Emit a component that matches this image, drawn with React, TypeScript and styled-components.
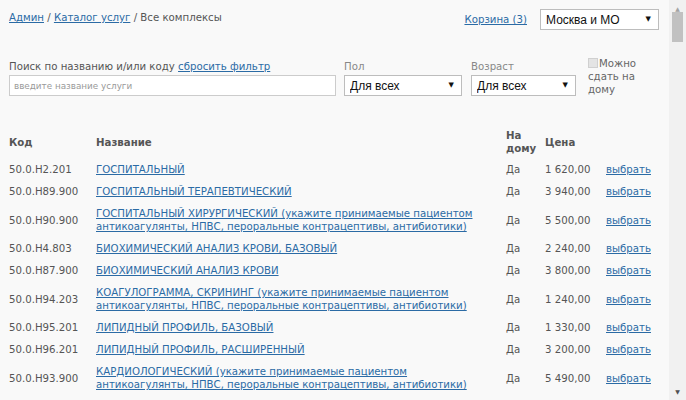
import React from 'react';
import styled, { createGlobalStyle } from 'styled-components';

interface Service {
  code: string;
  name: string;
  home: string;
  price: string;
}

const services: Service[] = [
  { code: '50.0.H2.201', name: 'ГОСПИТАЛЬНЫЙ', home: 'Да', price: '1 620,00' },
  { code: '50.0.H89.900', name: 'ГОСПИТАЛЬНЫЙ ТЕРАПЕВТИЧЕСКИЙ', home: 'Да', price: '3 940,00' },
  {
    code: '50.0.H90.900',
    name: 'ГОСПИТАЛЬНЫЙ ХИРУРГИЧЕСКИЙ (укажите принимаемые пациентом антикоагулянты, НПВС, пероральные контрацептивы, антибиотики)',
    home: 'Да',
    price: '5 500,00',
  },
  { code: '50.0.H4.803', name: 'БИОХИМИЧЕСКИЙ АНАЛИЗ КРОВИ, БАЗОВЫЙ', home: 'Да', price: '2 240,00' },
  { code: '50.0.H87.900', name: 'БИОХИМИЧЕСКИЙ АНАЛИЗ КРОВИ', home: 'Да', price: '3 800,00' },
  {
    code: '50.0.H94.203',
    name: 'КОАГУЛОГРАММА, СКРИНИНГ (укажите принимаемые пациентом антикоагулянты, НПВС, пероральные контрацептивы, антибиотики)',
    home: 'Да',
    price: '1 240,00',
  },
  { code: '50.0.H95.201', name: 'ЛИПИДНЫЙ ПРОФИЛЬ, БАЗОВЫЙ', home: 'Да', price: '1 330,00' },
  { code: '50.0.H96.201', name: 'ЛИПИДНЫЙ ПРОФИЛЬ, РАСШИРЕННЫЙ', home: 'Да', price: '3 200,00' },
  {
    code: '50.0.H93.900',
    name: 'КАРДИОЛОГИЧЕСКИЙ (укажите принимаемые пациентом антикоагулянты, НПВС, пероральные контрацептивы, антибиотики)',
    home: 'Да',
    price: '5 490,00',
  },
];

const GlobalStyle = createGlobalStyle`
  html, body {
    margin: 0;
    padding: 0;
    overflow: hidden;
    background: #f9f9f9;
  }
`;

const App: React.FC = () => {
  return (
    <>
      <GlobalStyle />
      <Frame>
        <Page>
          <TopBar>
            <Crumbs>
              <Link href="#">Админ</Link> / <Link href="#">Каталог услуг</Link> / Все комплексы
            </Crumbs>
            <Cart>
              <Link href="#">Корзина (3)</Link>
              <SelectBox width={119}>
                <Select defaultValue="msk">
                  <option value="msk">Москва и МО</option>
                </Select>
                <Caret>▼</Caret>
              </SelectBox>
            </Cart>
          </TopBar>

          <Filters>
            <Field gap={8}>
              <FieldLabel>
                Поиск по названию и/или коду <Link href="#">сбросить фильтр</Link>
              </FieldLabel>
              <SearchInput placeholder="введите название услуги" />
            </Field>
            <Field gap={9}>
              <FieldLabel light>Пол</FieldLabel>
              <SelectBox width={118}>
                <Select defaultValue="all">
                  <option value="all">Для всех</option>
                </Select>
                <Caret>▼</Caret>
              </SelectBox>
            </Field>
            <Field gap={12}>
              <FieldLabel light>Возраст</FieldLabel>
              <SelectBox width={105}>
                <Select defaultValue="all">
                  <option value="all">Для всех</option>
                </Select>
                <Caret>▼</Caret>
              </SelectBox>
            </Field>
            <HomeCheck>
              <Box />
              Можно сдать на дому
            </HomeCheck>
          </Filters>

          <Table>
            <colgroup>
              <col style={{ width: 87 }} />
              <col style={{ width: 410 }} />
              <col style={{ width: 39 }} />
              <col style={{ width: 61 }} />
              <col />
            </colgroup>
            <thead>
              <tr>
                <Th>Код</Th>
                <Th>Название</Th>
                <Th>На дому</Th>
                <Th>Цена</Th>
                <Th />
              </tr>
            </thead>
            <tbody>
              {services.map((s) => (
                <tr key={s.code}>
                  <Td>{s.code}</Td>
                  <Td>
                    <Link href="#">{s.name}</Link>
                  </Td>
                  <Td>{s.home}</Td>
                  <Td>{s.price}</Td>
                  <Td>
                    <Link href="#">выбрать</Link>
                  </Td>
                </tr>
              ))}
            </tbody>
          </Table>
        </Page>

        <ScrollBar>
          <ScrollArrow>▲</ScrollArrow>
          <Track>
            <Thumb />
          </Track>
          <ScrollArrow dark>▼</ScrollArrow>
        </ScrollBar>
      </Frame>
    </>
  );
};

export default App;

const Frame = styled.div`
  display: flex;
  height: 400px;
  overflow: hidden;
  font-family: 'DejaVu Sans', Verdana, sans-serif;
  font-size: 10.2px;
  line-height: 13px;
  color: #555;
`;

const Page = styled.div`
  flex: 1;
  min-width: 0;
  overflow: hidden;
  padding: 9px 10px 0 9px;
`;

const ScrollBar = styled.div`
  width: 17px;
  flex-shrink: 0;
  display: flex;
  flex-direction: column;
  background: #f1f1f1;
`;

const ScrollArrow = styled.div<{ dark?: boolean }>`
  height: 17px;
  display: flex;
  align-items: center;
  justify-content: center;
  font-family: 'DejaVu Sans', sans-serif;
  font-size: 6px;
  color: ${({ dark }) => (dark ? '#505050' : '#a3a3a3')};
`;

const Track = styled.div`
  flex: 1;
`;

const Thumb = styled.div`
  width: 11px;
  height: 30px;
  margin: -5px auto 0;
  background: #c1c1c1;
`;

const Link = styled.a`
  color: #2b6ba5;
  text-decoration: underline;
`;

const TopBar = styled.div`
  display: flex;
  justify-content: space-between;
  align-items: flex-start;
`;

const Crumbs = styled.div`
  padding-top: 2px;
`;

const Cart = styled.div`
  display: flex;
  align-items: center;
  gap: 13px;
`;

const SelectBox = styled.div<{ width: number }>`
  position: relative;
  width: ${({ width }) => width}px;
`;

const Select = styled.select`
  display: block;
  width: 100%;
  height: 21px;
  appearance: none;
  background: #fff;
  border: 1px solid #bdbdbd;
  border-radius: 0;
  padding: 0 20px 0 5px;
  font-family: 'Liberation Sans', Arial, sans-serif;
  font-size: 12px;
  color: #111;
  outline: none;
`;

const Caret = styled.span`
  position: absolute;
  right: 8px;
  top: 6px;
  font-size: 7px;
  line-height: 8px;
  color: #111;
  pointer-events: none;
`;

const Filters = styled.div`
  display: flex;
  align-items: flex-start;
  margin-top: 27px;
`;

const Field = styled.div<{ gap: number }>`
  display: flex;
  flex-direction: column;
  gap: 2px;
  margin-right: ${({ gap }) => gap}px;
  padding-top: 3px;
`;

const FieldLabel = styled.div<{ light?: boolean }>`
  color: ${({ light }) => (light ? '#888' : '#555')};
`;

const SearchInput = styled.input`
  box-sizing: border-box;
  width: 327px;
  height: 21px;
  border: 1px solid #ccc;
  background: #fff;
  padding: 0 4px;
  font-family: 'DejaVu Sans', Verdana, sans-serif;
  font-size: 8.8px;
  outline: none;

  &::placeholder {
    color: #999;
  }
`;

const HomeCheck = styled.label`
  width: 56px;
  color: #666;
`;

const Box = styled.span`
  display: inline-block;
  box-sizing: border-box;
  width: 10px;
  height: 10px;
  margin-right: 1px;
  vertical-align: -1px;
  border: 1px solid #d0d0d0;
  background: #e4e4e4;
`;

const Table = styled.table`
  width: 651px;
  margin-top: 33px;
  border-collapse: collapse;
  table-layout: fixed;
`;

const Th = styled.th`
  padding: 0 8px 3px 0;
  text-align: left;
  vertical-align: middle;
  font-weight: bold;
  color: #555;
`;

const Td = styled.td`
  padding: 5px 8px 4px 0;
  vertical-align: middle;
`;
